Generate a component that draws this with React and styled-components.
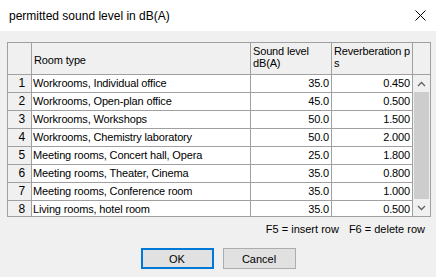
import React from "react";
import styled, { createGlobalStyle } from "styled-components";

const GlobalStyle = createGlobalStyle`
  html, body {
    margin: 0;
    padding: 0;
    background: #f0f0f0;
  }
  body {
    font-family: "Liberation Sans", Arial, sans-serif;
    color: #000;
  }
`;

const Dialog = styled.div`
  width: 436px;
  height: 277px;
  background: #f0f0f0;
  display: flex;
  flex-direction: column;
  overflow: hidden;
`;

const TitleBar = styled.div`
  height: 31px;
  background: #fff;
  display: flex;
  align-items: center;
  justify-content: space-between;
  padding: 0 10px 0 9px;
  box-sizing: border-box;
`;

const Title = styled.span`
  font-size: 12px;
  color: #000;
`;

const Body = styled.div`
  flex: 1;
  padding: 11px 6px 0 7px;
  display: flex;
  flex-direction: column;
`;

const Frame = styled.div`
  width: 424px;
  height: 175px;
  box-sizing: border-box;
  border: 1px solid #a0a0a0;
  display: flex;
  overflow: hidden;
  background: #fff;
`;

const Table = styled.div`
  display: grid;
  grid-template-columns: 23px 218px 80px 80px;
  grid-auto-rows: 17px;
  grid-template-rows: 31px;
  gap: 1px;
  background: #a0a0a0;
  border-right: 1px solid #a0a0a0;
  align-self: flex-start;
  font-size: 11px;
  letter-spacing: -0.15px;
`;

const HeadCell = styled.div`
  background: #f0f0f0;
  padding: 2px 2px 0 2px;
  line-height: 12px;
  overflow: hidden;
  display: flex;
  flex-direction: column;
  justify-content: ${(p) => (p.center ? "center" : "flex-start")};
`;

const Clip = styled.span`
  white-space: nowrap;
  overflow: hidden;
`;

const RowNum = styled.div`
  background: #f0f0f0;
  text-align: right;
  padding-right: 6px;
  line-height: 17px;
  font-size: 12px;
`;

const Cell = styled.div`
  background: #fff;
  line-height: 17px;
  white-space: nowrap;
  overflow: hidden;
  padding: ${(p) => (p.num ? "0 2px 0 0" : "0 0 0 1px")};
  text-align: ${(p) => (p.num ? "right" : "left")};
`;

const Side = styled.div`
  width: 17px;
  display: flex;
  flex-direction: column;
  background: #f0f0f0;
`;

const SideHead = styled.div`
  height: 31px;
  border-bottom: 1px solid #a0a0a0;
  background: #f0f0f0;
`;

const Scroll = styled.div`
  height: 141px;
  display: flex;
  flex-direction: column;
  background: #f0f0f0;
`;

const Arrow = styled.div`
  height: 17px;
  display: flex;
  align-items: center;
  justify-content: center;
`;

const Thumb = styled.div`
  flex: 1;
  margin: 0 1px 0 1px;
  background: #cdcdcd;
`;

const Hint = styled.div`
  display: flex;
  justify-content: flex-end;
  gap: 10px;
  font-size: 11px;
  padding: 5px 5px 0 0;
  height: 14px;
  line-height: 14px;
`;

const Buttons = styled.div`
  display: flex;
  justify-content: center;
  gap: 9px;
  margin-top: 12px;
  padding-right: 1px;
`;

const Button = styled.button`
  width: 73px;
  height: 21px;
  box-sizing: border-box;
  background: #e1e1e1;
  border: ${(p) => (p.primary ? "2px solid #0078d7" : "1px solid #adadad")};
  font-family: "Liberation Sans", Arial, sans-serif;
  font-size: 11px;
  color: #000;
  padding: 0;
  border-radius: 0;
`;

const rows = [
  ["Workrooms, Individual office", "35.0", "0.450"],
  ["Workrooms, Open-plan office", "45.0", "0.500"],
  ["Workrooms, Workshops", "50.0", "1.500"],
  ["Workrooms, Chemistry laboratory", "50.0", "2.000"],
  ["Meeting rooms, Concert hall, Opera", "25.0", "1.800"],
  ["Meeting rooms, Theater, Cinema", "35.0", "0.800"],
  ["Meeting rooms, Conference room", "35.0", "1.000"],
  ["Living rooms, hotel room", "35.0", "0.500"],
];

const App = () => {
  return (
    <Dialog>
      <GlobalStyle />
      <TitleBar>
        <Title>permitted sound level in dB(A)</Title>
        <svg width="11" height="11" viewBox="0 0 11 11">
          <path d="M0.5 0.5 L10.5 10.5 M10.5 0.5 L0.5 10.5" stroke="#000" strokeWidth="1" />
        </svg>
      </TitleBar>
      <Body>
        <Frame>
          <Table>
            <HeadCell />
            <HeadCell center>Room type</HeadCell>
            <HeadCell>
              <Clip>Sound level</Clip>
              <Clip>dB(A)</Clip>
            </HeadCell>
            <HeadCell>
              <Clip>Reverberation period</Clip>
              <Clip>s</Clip>
            </HeadCell>
            {rows.map((r, i) => (
              <React.Fragment key={i}>
                <RowNum>{i + 1}</RowNum>
                <Cell>{r[0]}</Cell>
                <Cell num>{r[1]}</Cell>
                <Cell num>{r[2]}</Cell>
              </React.Fragment>
            ))}
          </Table>
          <Side>
            <SideHead />
            <Scroll>
              <Arrow>
                <svg width="9" height="6" viewBox="0 0 9 6">
                  <path d="M1 5 L4.5 1.5 L8 5" stroke="#606060" strokeWidth="1.3" fill="none" />
                </svg>
              </Arrow>
              <Thumb />
              <Arrow>
                <svg width="9" height="6" viewBox="0 0 9 6">
                  <path d="M1 1 L4.5 4.5 L8 1" stroke="#606060" strokeWidth="1.3" fill="none" />
                </svg>
              </Arrow>
            </Scroll>
          </Side>
        </Frame>
        <Hint>
          <span>F5 = insert row</span>
          <span>F6 = delete row</span>
        </Hint>
        <Buttons>
          <Button primary>OK</Button>
          <Button>Cancel</Button>
        </Buttons>
      </Body>
    </Dialog>
  );
};

export default App;
